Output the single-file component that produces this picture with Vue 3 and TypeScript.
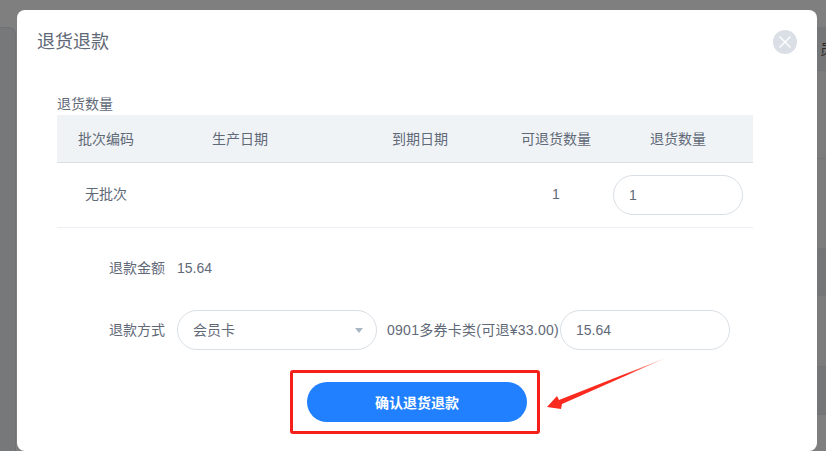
<script setup lang="ts">
interface Batch {
  code: string;
  produced: string;
  expires: string;
  available: number;
}

const columns = ["批次编码", "生产日期", "到期日期", "可退货数量", "退货数量"];
const batches: Batch[] = [{ code: "无批次", produced: "", expires: "", available: 1 }];
const refundAmount = "15.64";
</script>

<template>
  <div class="page">
    <!-- page behind the mask -->
    <div class="behind-left"></div>
    <div class="behind-right">
      <div class="band dark head"><span class="clipped">员</span></div>
      <div class="band row-a"></div>
      <div class="band row-b"></div>
      <div class="band dark row-c"></div>
      <div class="band row-d"></div>
      <div class="band dark row-e"></div>
      <div class="band"></div>
    </div>

    <div class="modal">
      <div class="modal-header">
        <h3>退货退款</h3>
        <button class="close" aria-label="关闭">
          <svg width="24" height="24" viewBox="0 0 24 24">
            <path d="M6.5 6.5l11 11M17.5 6.5l-11 11" stroke="#fff" stroke-width="1.4" fill="none" />
          </svg>
        </button>
      </div>

      <div class="modal-body">
        <div class="section-title">退货数量</div>
        <div class="table">
          <div class="tr th">
            <div v-for="col in columns" :key="col" class="cell">{{ col }}</div>
          </div>
          <div v-for="batch in batches" :key="batch.code" class="tr td">
            <div class="cell batch-code">{{ batch.code }}</div>
            <div class="cell">{{ batch.produced }}</div>
            <div class="cell">{{ batch.expires }}</div>
            <div class="cell available">{{ batch.available }}</div>
            <div class="cell qty-cell">
              <input class="input qty" :value="batch.available" />
            </div>
          </div>
        </div>

        <div class="form-row amount">
          <span class="label">退款金额</span>
          <span>{{ refundAmount }}</span>
        </div>

        <div class="form-row method">
          <span class="label">退款方式</span>
          <div class="select">
            <span class="select-value">会员卡</span>
            <i class="caret"></i>
          </div>
          <span class="card-name">0901多券卡类(可退¥33.00)</span>
          <input class="input money" :value="refundAmount" />
        </div>
      </div>

      <div class="actions">
        <div class="highlight">
          <button class="submit">确认退货退款</button>
        </div>
        <!-- annotation arrow -->
        <svg class="arrow" width="130" height="60" viewBox="0 0 130 60">
          <defs>
            <linearGradient id="fade" x1="1" y1="0" x2="0" y2="1">
              <stop offset="0" stop-color="#fb2a1e" stop-opacity="0.1" />
              <stop offset="0.35" stop-color="#fb2a1e" />
            </linearGradient>
          </defs>
          <path d="M3 50 L13 39 L15 43 L124 0 L18 47 L17 52 Z" fill="url(#fade)" />
        </svg>
      </div>
    </div>
  </div>
</template>

<style scoped>
.page {
  position: relative;
  width: 826px;
  height: 451px;
  overflow: hidden;
  background: #7f7f7f;
  font-family: "Liberation Sans", "Noto Sans CJK SC", sans-serif;
  font-size: 14px;
  color: #5f6977;
}

.behind-left {
  position: absolute;
  left: -20px;
  top: 27px;
  width: 36px;
  height: 440px;
  background: #76787a;
  border-radius: 8px;
  box-shadow: inset 0 0 0 1px #6f7173;
}

.behind-right {
  position: absolute;
  left: 817px;
  top: 27px;
  width: 9px;
  display: flex;
  flex-direction: column;
}

.band {
  border-bottom: 1px solid #727476;
  background: #7c7c7c;
}

.band.dark {
  background: #747678;
}

.head {
  height: 43px;
  overflow: hidden;
  line-height: 44px;
}

.clipped {
  margin-left: 3px;
  color: #2f2a26;
  font-size: 14px;
}

.row-a { height: 87px; }
.row-b { height: 89px; }
.row-c { height: 46px; }
.row-d { height: 70px; }
.row-e { height: 46px; }

.modal {
  position: relative;
  box-sizing: border-box;
  margin: 0 0 0 17px;
  top: 10px;
  width: 800px;
  height: 441px;
  background: #fff;
  border-radius: 8px;
}

.modal-header {
  display: flex;
  justify-content: space-between;
  align-items: center;
  height: 24px;
  padding: 20px 20px 0;
}

.modal-header h3 {
  margin: 0;
  font-size: 18px;
  font-weight: 400;
  line-height: 24px;
  color: #5f6977;
}

.close {
  width: 24px;
  height: 24px;
  padding: 0;
  border: none;
  border-radius: 50%;
  background: #d9dfe5;
  display: flex;
}

.modal-body {
  padding: 41px 64px 0 40px;
}

.section-title {
  line-height: 18px;
  margin-bottom: 2px;
}

.tr {
  display: grid;
  grid-template-columns: 98px 170px 190px 82px 156px;
  align-items: center;
  text-align: center;
}

.th {
  height: 47px;
  background: #f0f3f6;
  border-bottom: 1px solid #d9dfe5;
}

.th .cell {
  padding-bottom: 2px;
}

.td {
  height: 64px;
  border-bottom: 1px solid #ebeef2;
}

.th .cell:last-child {
  padding-left: 6px;
}

.batch-code {
  padding-bottom: 4px;
}

.available {
  padding-bottom: 2px;
}

.qty-cell {
  display: flex;
  padding-left: 16px;
}

.input {
  box-sizing: border-box;
  height: 40px;
  padding: 0 15px;
  border: 1px solid #d9dfe5;
  border-radius: 20px;
  outline: none;
  font: inherit;
  color: #5f6977;
  background: #fff;
}

.qty {
  width: 130px;
}

.money {
  width: 170px;
}

.form-row {
  display: flex;
  align-items: center;
  padding-left: 52px;
}

.amount {
  height: 20px;
  margin-top: 30px;
}

.method {
  height: 40px;
  margin-top: 32px;
}

.label {
  margin-right: 12px;
  padding-bottom: 2px;
}

.select {
  box-sizing: border-box;
  display: flex;
  justify-content: space-between;
  align-items: center;
  width: 200px;
  height: 40px;
  padding: 0 13px 0 15px;
  border: 1px solid #d9dfe5;
  border-radius: 20px;
}

.select-value {
  padding-bottom: 2px;
}

.caret {
  width: 0;
  height: 0;
  border-left: 4px solid transparent;
  border-right: 4px solid transparent;
  border-top: 5px solid #a9b6c4;
}

.card-name {
  width: 173px;
  margin-left: 10px;
  padding-bottom: 2px;
  white-space: nowrap;
  letter-spacing: 0.26px;
}

.actions {
  position: relative;
  display: flex;
  justify-content: center;
  margin-top: 20px;
}

.highlight {
  box-sizing: border-box;
  display: flex;
  align-items: flex-start;
  width: 250px;
  height: 64px;
  margin-left: -4px;
  padding: 8px 0 0 14px;
  border: 3px solid #f5201a;
  border-radius: 3px;
}

.submit {
  width: 220px;
  height: 40px;
  margin-top: 1px;
  padding: 0;
  border: none;
  border-radius: 20px;
  background: #2080ff;
  color: #fff;
  font: inherit;
  font-weight: 700;
}

.arrow {
  position: absolute;
  left: 527px;
  top: -13px;
}
</style>
